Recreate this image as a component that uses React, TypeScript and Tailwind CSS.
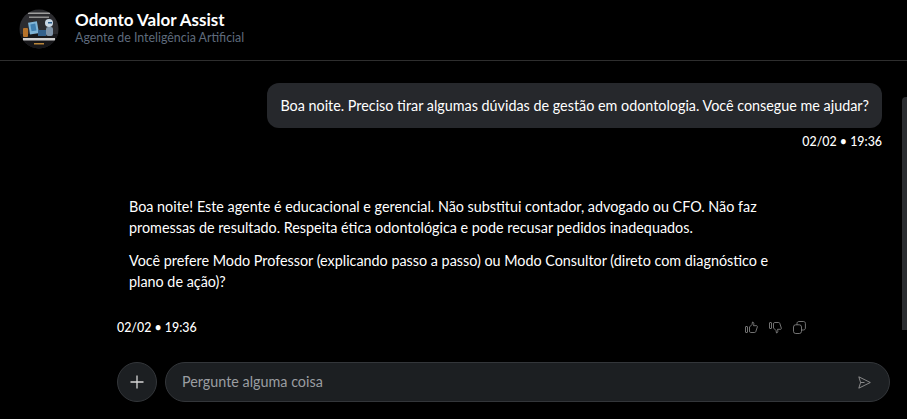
function Avatar() {
  return (
    <svg width="40" height="40" viewBox="0 0 40 40" className="shrink-0">
      <defs>
        <clipPath id="avatar-clip">
          <circle cx="20" cy="20" r="19.5" />
        </clipPath>
      </defs>
      <g clipPath="url(#avatar-clip)">
        <rect width="40" height="40" fill="#2c2c30" />
        <rect x="0" y="25" width="40" height="15" fill="#17171a" />
        <rect x="9" y="3.5" width="22" height="1.5" fill="#9f9f9f" />
        <rect x="10" y="7.5" width="20" height="1.5" fill="#8f8f8f" />
        <rect x="10" y="13" width="9" height="12" fill="#7fb4d6" transform="rotate(-10 14 19)" />
        <rect x="12" y="15" width="5" height="7" fill="#3f7fb0" transform="rotate(-10 14 19)" />
        <rect x="4" y="19" width="5" height="9" rx="1" fill="#b5722a" />
        <rect x="19" y="21" width="8" height="6" fill="#33618c" />
        <circle cx="30" cy="14" r="4" fill="#c9d8e6" />
        <rect x="29" y="13" width="4" height="1.5" fill="#2b5d8a" />
        <rect x="27" y="18" width="7" height="9" rx="2" fill="#8094a8" />
        <rect x="4" y="29" width="32" height="2.5" fill="#cfcfcf" />
        <rect x="15" y="34" width="10" height="1.5" fill="#b9863a" />
      </g>
    </svg>
  );
}

function ThumbUpIcon({ flip }: { flip?: boolean }) {
  return (
    <svg width="13" height="13" viewBox="0 0 13 13" fill="none" stroke="#8f8f8f" strokeWidth="0.8" strokeLinejoin="round" className={flip ? "rotate-180 -scale-x-100" : ""}>
      <rect x="0.5" y="5.5" width="2" height="6" rx="0.5" />
      <path d="M4.5 6 L7 3.5 L7.5 1 C8.5 1 9 2 8.8 3.2 L8.5 4.7 L11.6 4.7 C12.3 4.7 12.6 5.4 12.3 6 L10.8 10.6 C10.6 11.2 10.2 11.5 9.6 11.5 L5.8 11.5 L4.5 10.8 Z" />
    </svg>
  );
}

function CopyIcon() {
  return (
    <svg width="13" height="13" viewBox="0 0 13 13" fill="none" stroke="#8f8f8f" strokeWidth="0.8">
      <rect x="0.5" y="3.8" width="8" height="8.7" rx="2.2" />
      <path d="M4 3.8 L4 2.4 C4 1.3 4.8 0.5 5.9 0.5 L10.4 0.5 C11.5 0.5 12.4 1.3 12.4 2.4 L12.4 7 C12.4 8.1 11.6 9 10.4 9 L8.5 9" />
    </svg>
  );
}

function SendIcon() {
  return (
    <svg width="13" height="13" viewBox="0 0 13 13" fill="none" stroke="#a3a3a3" strokeWidth="0.8" strokeLinejoin="round">
      <path d="M0.8 0.8 L12.3 6.5 L0.8 12.2 L2.6 6.5 Z" />
      <path d="M2.6 6.5 L6.5 6.5" />
    </svg>
  );
}

export default function App() {
  return (
    <div className="relative flex h-[419px] w-[907px] flex-col overflow-hidden bg-black font-['Lato',sans-serif] text-white">
      <header className="flex h-[61px] shrink-0 items-center gap-4 border-b border-[#2e2e2e] pb-[3px] pl-[19px]">
        <Avatar />
        <div className="-mt-px">
          <p className="text-[17px] leading-5 font-bold">Odonto Valor Assist</p>
          <p className="text-[12.4px] leading-4 text-[#5f6b7c]">Agente de Inteligência Artificial</p>
        </div>
      </header>

      <main className="flex flex-1 flex-col">
        <div className="mt-[22px] mr-[25px] flex justify-end">
          <div className="rounded-xl bg-[#26282c] px-[13px] py-3 text-[14.35px] leading-[21px]">
            Boa noite. Preciso tirar algumas dúvidas de gestão em odontologia. Você consegue me ajudar?
          </div>
        </div>
        <p className="mt-1.5 mr-[25px] text-right text-[12.4px] leading-4 font-medium">02/02 • 19:36</p>

        <div className="mt-[46px] ml-[129px] w-[660px] space-y-3 text-[14.35px] leading-[21px]">
          <p>
            Boa noite! Este agente é educacional e gerencial. Não substitui contador, advogado ou CFO. Não faz promessas
            de resultado. Respeita ética odontológica e pode recusar pedidos inadequados.
          </p>
          <p>
            Você prefere Modo Professor (explicando passo a passo) ou Modo Consultor (direto com diagnóstico e plano de
            ação)?
          </p>
        </div>

        <div className="mt-[28px] ml-[117px] flex w-[689px] items-center justify-between">
          <span className="text-[12.4px] leading-4 font-medium">02/02 • 19:36</span>
          <div className="-mt-0.5 flex gap-[11px]">
            <ThumbUpIcon />
            <ThumbUpIcon flip />
            <CopyIcon />
          </div>
        </div>

        <div className="mt-[26px] ml-[117px] flex items-center gap-2">
          <button className="flex size-10 items-center justify-center rounded-full border border-[#33363a] bg-[#1c1f22]">
            <svg width="14" height="14" viewBox="0 0 14 14" stroke="#d6d6d6" strokeWidth="1.3">
              <path d="M7 0.5 V13.5 M0.5 7 H13.5" />
            </svg>
          </button>
          <div className="flex h-10 w-[725px] items-center justify-between rounded-full border border-[#33363a] bg-[#1c1f22] pr-[18px] pl-4">
            <span className="text-[14.35px] text-[#9a9da1]">Pergunte alguma coisa</span>
            <SendIcon />
          </div>
        </div>
      </main>

      <div className="absolute top-[97px] right-0 h-[233px] w-[5px] rounded-tl bg-[#2b2d30]" />
    </div>
  );
}
